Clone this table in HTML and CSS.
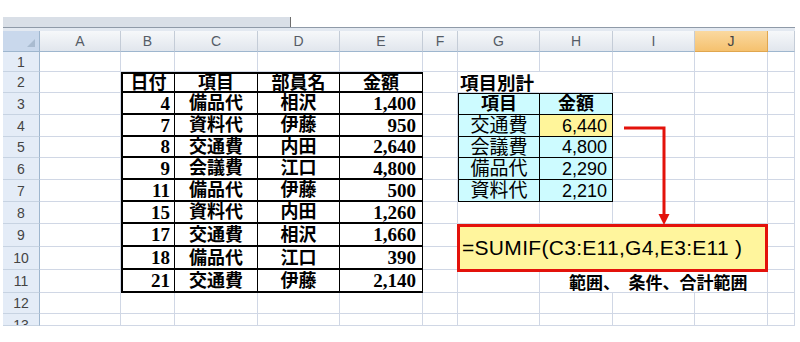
FILE: index.html
```html
<!DOCTYPE html>
<html lang="ja">
<head>
<meta charset="utf-8">
<title>SUMIF</title>
<link rel="stylesheet" href="styles.css">
</head>
<body>
<div class="page">
  <div class="bar"><div class="bar-field"></div></div>
  <div class="bar-gap"></div>
  <div class="sheet">
    <!-- header -->
    <div class="corner"><svg width="8" height="8" viewBox="0 0 8 8"><polygon points="8,0 8,8 0,8" fill="#a9bbd0"/></svg></div>
    <div class="ch">A</div><div class="ch">B</div><div class="ch">C</div><div class="ch">D</div><div class="ch">E</div><div class="ch">F</div><div class="ch">G</div><div class="ch">H</div><div class="ch">I</div><div class="ch sel">J</div><div class="ch"></div>
    <!-- 1 -->
    <div class="rh">1</div><div></div><div></div><div></div><div></div><div></div><div></div><div></div><div></div><div></div><div></div><div></div>
    <!-- 2 -->
    <div class="rh">2</div><div></div>
    <div class="m t l">日付</div><div class="m t">項目</div><div class="m t">部員名</div><div class="m t">金額</div>
    <div></div><div class="title">項目別計</div><div></div><div></div><div></div><div></div>
    <!-- 3 -->
    <div class="rh">3</div><div></div>
    <div class="m l n">4</div><div class="m">備品代</div><div class="m">相沢</div><div class="m n e">1,400</div>
    <div></div><div class="s sl st sh">項目</div><div class="s st sh">金額</div><div></div><div></div><div></div>
    <!-- 4 -->
    <div class="rh">4</div><div></div>
    <div class="m l n">7</div><div class="m">資料代</div><div class="m">伊藤</div><div class="m n e">950</div>
    <div></div><div class="s sl">交通費</div><div class="s num hl">6,440</div><div></div><div></div><div></div>
    <!-- 5 -->
    <div class="rh">5</div><div></div>
    <div class="m l n">8</div><div class="m">交通費</div><div class="m">内田</div><div class="m n e">2,640</div>
    <div></div><div class="s sl">会議費</div><div class="s num">4,800</div><div></div><div></div><div></div>
    <!-- 6 -->
    <div class="rh">6</div><div></div>
    <div class="m l n">9</div><div class="m">会議費</div><div class="m">江口</div><div class="m n e">4,800</div>
    <div></div><div class="s sl">備品代</div><div class="s num">2,290</div><div></div><div></div><div></div>
    <!-- 7 -->
    <div class="rh">7</div><div></div>
    <div class="m l n">11</div><div class="m">備品代</div><div class="m">伊藤</div><div class="m n e">500</div>
    <div></div><div class="s sl">資料代</div><div class="s num">2,210</div><div></div><div></div><div></div>
    <!-- 8 -->
    <div class="rh">8</div><div></div>
    <div class="m l n">15</div><div class="m">資料代</div><div class="m">内田</div><div class="m n e">1,260</div>
    <div></div><div></div><div></div><div></div><div></div><div></div>
    <!-- 9 -->
    <div class="rh">9</div><div></div>
    <div class="m l n">17</div><div class="m">交通費</div><div class="m">相沢</div><div class="m n e">1,660</div>
    <div></div><div></div><div></div><div></div><div></div><div></div>
    <!-- 10 -->
    <div class="rh">10</div><div></div>
    <div class="m l n">18</div><div class="m">備品代</div><div class="m">江口</div><div class="m n e">390</div>
    <div></div><div></div><div></div><div></div><div></div><div></div>
    <!-- 11 -->
    <div class="rh">11</div><div></div>
    <div class="m l n">21</div><div class="m">交通費</div><div class="m">伊藤</div><div class="m n e">2,140</div>
    <div></div><div></div><div class="note">範囲、　条件、合計範囲</div><div></div>
    <!-- 12 -->
    <div class="rh">12</div><div></div><div></div><div></div><div></div><div></div><div></div><div></div><div></div><div></div><div></div><div></div>
    <!-- 13 -->
    <div class="rh cut">13</div><div></div><div></div><div></div><div></div><div></div><div></div><div></div><div></div><div></div><div></div><div></div>

    <svg class="arrow" width="52" height="104" viewBox="0 0 52 104">
      <polyline points="6,6 46,6 46,94" fill="none" stroke="#e3120b" stroke-width="3"/>
      <polygon points="40.5,92 51.5,92 46,103" fill="#e3120b"/>
    </svg>
    <p class="formula">=SUMIF(C3:E11,G4,E3:E11 )</p>
  </div>
</div>
</body>
</html>
```
FILE: styles.css
```css
* { box-sizing: border-box; margin: 0; padding: 0; }
body {
  background: #fff;
  font-family: "Liberation Sans", Arial, sans-serif;
  width: 800px;
  height: 342px;
  overflow: hidden;
}
.page { padding: 17px 0 0 3px; }
.bar {
  display: flex;
  width: 792px;
  height: 11px;
  border-bottom: 1px solid #8f9aa8;
}
.bar-field {
  width: 288px;
  height: 10px;
  background: #d9dfe7;
  border-right: 1px solid #6d6d6d;
}
.bar-gap { width: 792px; height: 3px; background: #e3e9f1; }

.sheet {
  position: relative;
  display: grid;
  width: 792px;
  grid-template-columns: 37px 81px 54px 83px 82px 83px 35px 82px 73px 82px 73px 27px;
  grid-template-rows: 21px 20px 21px 22px 22px 21px 22px 22px 22px 23px 23px 23px 21px 12px;
}
.sheet > div {
  display: flex;
  align-items: center;
  justify-content: center;
  white-space: nowrap;
  overflow: hidden;
  line-height: 1;
  border-right: 1px solid #d0d7e5;
  border-bottom: 1px solid #d0d7e5;
  color: #000;
}
.sheet > .corner {
  background: #c9d8ec;
  border-right: 1px solid #9eb6ce;
  border-bottom: 1px solid #9eb6ce;
  justify-content: flex-end;
  align-items: flex-end;
  padding: 0 4px 4px 0;
}
.sheet > .ch {
  background: linear-gradient(#f6f8fa, #e1e6ed);
  border-right-color: #c4ccd7;
  border-bottom-color: #9eb6ce;
  color: #555c66;
  font-size: 14px;
}
.sheet > .ch.sel {
  background: linear-gradient(#fad9a0, #f5c16e);
  border-right-color: #e0a64f;
  border-bottom-color: #e0a64f;
  color: #444;
}
.sheet > .rh {
  background: #e4ecf7;
  border-right-color: #9eb6ce;
  border-bottom-color: #c7d3e2;
  color: #444;
  font-size: 14px;
}
.sheet > .rh.cut {
  display: block;
  text-align: center;
  line-height: 23px;
}

/* main table */
.sheet > .m {
  background: #fff;
  border-right: 1px solid #000;
  border-bottom: 2px solid #000;
  font-family: "Liberation Serif", "Noto Sans CJK JP", serif;
  font-weight: bold;
  font-size: 18px;
}
.sheet > .m.l { border-left: 2px solid #000; }
.sheet > .m.t { border-top: 2px solid #000; }
.sheet > .m.n { justify-content: flex-end; padding-right: 4px; font-size: 19px; }
.sheet > .m.e { padding-right: 6px; }

/* summary table */
.sheet > .title {
  justify-content: flex-start;
  padding-left: 2px;
  font-family: "Noto Sans CJK JP", sans-serif;
  font-weight: bold;
  font-size: 18.5px;
  overflow: visible;
  border-right-color: transparent;
}
.sheet > .s {
  background: #cdfbff;
  border-right: 1px solid #000;
  border-bottom: 1px solid #000;
  font-family: "Liberation Sans", "Noto Sans CJK JP", sans-serif;
  font-size: 19px;
}
.sheet > .s.sl { border-left: 1px solid #000; }
.sheet > .s.st { border-top: 1px solid #000; }
.sheet > .s.sh { font-weight: bold; font-size: 18px; }
.sheet > .s.num { justify-content: flex-end; padding-right: 5px; font-size: 18px; }
.sheet > .s.hl { background: #fff59a; }

.sheet > .note {
  grid-column: span 3;
  justify-content: flex-start;
  align-items: flex-end;
  padding: 0 0 2px 29px;
  overflow: visible;
  font-family: "Noto Sans CJK JP", sans-serif;
  font-weight: bold;
  font-size: 17px;
}

/* overlays */
.arrow {
  position: absolute;
  left: 615px;
  top: 91px;
}
.formula {
  position: absolute;
  left: 454px;
  top: 193px;
  width: 311px;
  height: 48px;
  border: 3px solid #e3120b;
  background: #fff59d;
  display: flex;
  align-items: center;
  padding-left: 2px;
  font-family: "Liberation Sans", "Noto Sans CJK JP", sans-serif;
  font-size: 21px;
  letter-spacing: 0.3px;
  white-space: pre;
}
```
